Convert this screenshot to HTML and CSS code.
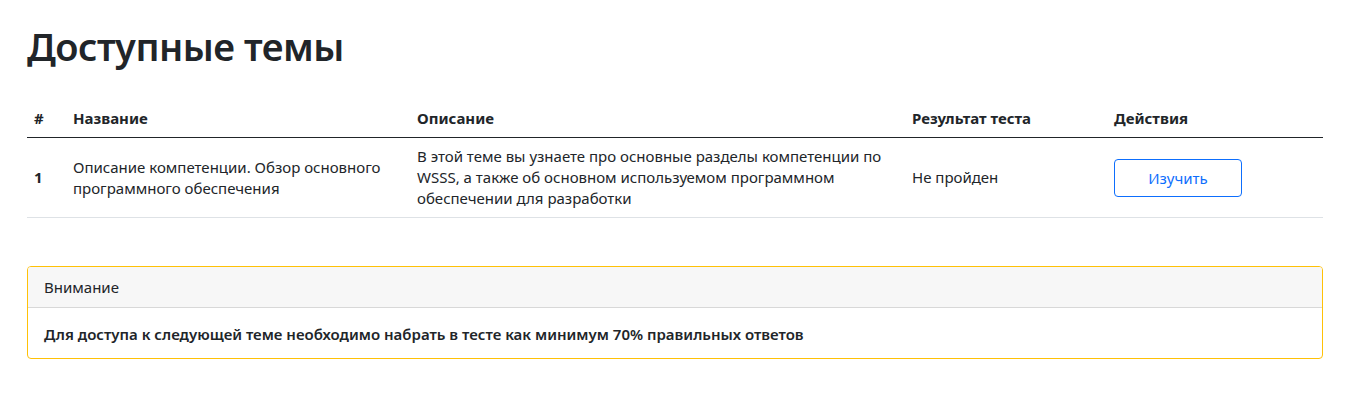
FILE: index.html
```html
<!DOCTYPE html>
<html lang="ru">
<head>
<meta charset="utf-8">
<title>Доступные темы</title>
<link rel="stylesheet" href="styles.css">
</head>
<body>
<main class="page">
  <h1 class="title">Доступные темы</h1>
  <table class="topics">
    <colgroup>
      <col class="c-num"><col class="c-name"><col class="c-desc"><col class="c-res"><col class="c-act">
    </colgroup>
    <thead>
      <tr>
        <th>#</th>
        <th>Название</th>
        <th>Описание</th>
        <th>Результат теста</th>
        <th>Действия</th>
      </tr>
    </thead>
    <tbody>
      <tr>
        <th class="num">1</th>
        <td>Описание компетенции. Обзор основного программного обеспечения</td>
        <td>В этой теме вы узнаете про основные разделы компетенции по WSSS, а также об основном используемом программном обеспечении для разработки</td>
        <td>Не пройден</td>
        <td><button class="btn-outline" type="button">Изучить</button></td>
      </tr>
    </tbody>
  </table>
  <section class="card">
    <div class="card-header">Внимание</div>
    <div class="card-body">Для доступа к следующей теме необходимо набрать в тесте как минимум 70% правильных ответов</div>
  </section>
</main>
</body>
</html>
```

FILE: styles.css
```css
* { box-sizing: border-box; }
html, body { margin: 0; padding: 0; background: #fff; }
body {
  font-family: "Noto Sans", "Open Sans", "Liberation Sans", sans-serif;
  font-size: 15px;
  line-height: 21px;
  color: #212529;
}
.page {
  padding: 22px 32px 0 27px;
}
.title {
  margin: 0 0 30px;
  font-size: 38px;
  line-height: 48px;
  font-weight: 600;
  letter-spacing: -0.5px;
}
.topics {
  width: 100%;
  border-collapse: collapse;
  table-layout: fixed;
  margin-bottom: 48px;
}
.c-num { width: 39px; }
.c-name { width: 344px; }
.c-desc { width: 495px; }
.c-res { width: 202px; }
.c-act { width: 216px; }
.topics th, .topics td {
  padding: 8px 7px;
  text-align: left;
  vertical-align: middle;
}
.topics thead th {
  font-weight: 700;
  border-bottom: 1.5px solid #212529;
}
.topics tbody th, .topics tbody td {
  border-bottom: 1px solid #dee2e6;
  font-weight: 400;
}
.topics tbody th.num { font-weight: 700; }
.btn-outline {
  width: 128px;
  height: 38px;
  padding: 6px 12px;
  font-family: inherit;
  font-size: 15px;
  line-height: 24px;
  color: #0d6efd;
  background: #fff;
  border: 1px solid #0d6efd;
  border-radius: 4px;
}
.card {
  border: 1px solid #ffc107;
  border-radius: 4px;
  overflow: hidden;
}
.card-header {
  height: 41px;
  padding: 10px 16px;
  background: #f7f7f7;
  border-bottom: 1px solid rgba(0,0,0,.125);
}
.card-body {
  padding: 16px 16px 13px;
  font-weight: 600;
}
```
